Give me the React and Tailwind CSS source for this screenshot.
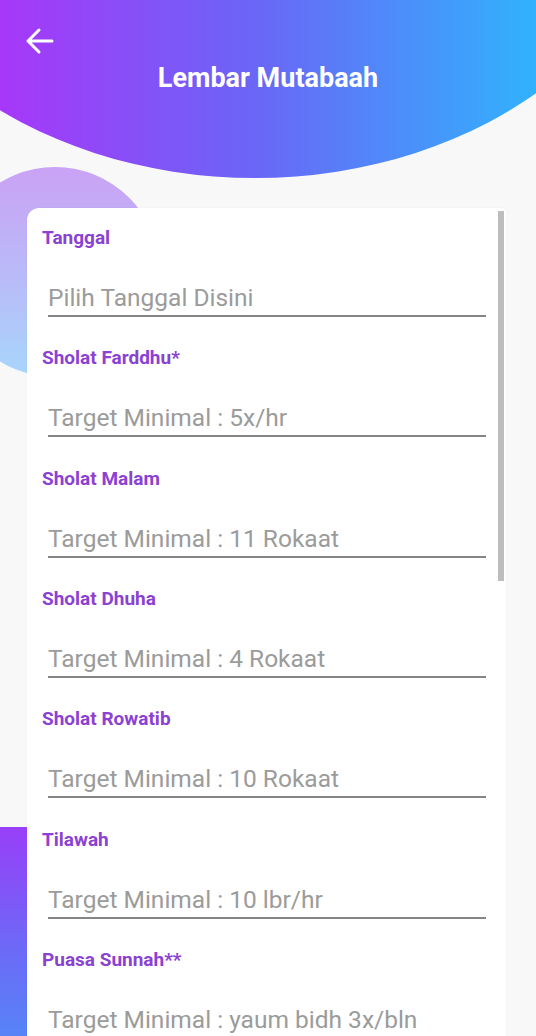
import React from "react";

const fields = [
  { label: "Tanggal", placeholder: "Pilih Tanggal Disini" },
  { label: "Sholat Farddhu*", placeholder: "Target Minimal : 5x/hr" },
  { label: "Sholat Malam", placeholder: "Target Minimal : 11 Rokaat" },
  { label: "Sholat Dhuha", placeholder: "Target Minimal : 4 Rokaat" },
  { label: "Sholat Rowatib", placeholder: "Target Minimal : 10 Rokaat" },
  { label: "Tilawah", placeholder: "Target Minimal : 10 lbr/hr" },
  { label: "Puasa Sunnah**", placeholder: "Target Minimal : yaum bidh 3x/bln" },
];

// satu baris isian: label ungu + input bergaris bawah
function Field({ label, placeholder }) {
  return (
    <div className="flex flex-col h-[120.33px]">
      <div className="pl-[15px] text-[19px] leading-[20px] font-bold text-[#8b41d3]">
        {label}
      </div>
      <div className="mt-[29px] ml-[21px] w-[438px] h-[40px] flex items-center border-b-[2px] border-[#858585]">
        <span className="pt-[4px] text-[24.5px] leading-[30px] font-normal text-[#9b9b9b] whitespace-nowrap">
          {placeholder}
        </span>
      </div>
    </div>
  );
}

export default function App() {
  return (
    <div
      className="relative w-[536px] h-[1036px] overflow-hidden bg-[#f8f8f8]"
      style={{ fontFamily: "Roboto, 'Noto Sans', sans-serif" }}
    >
      {/* latar dekoratif */}
      <div className="absolute left-[-165px] top-[-482px] w-[840px] h-[660px] rounded-[50%] bg-[linear-gradient(90deg,#c02cfc_0%,#a737f9_19.6%,#6a66f6_50%,#31b2fd_83.5%,#1ec8ff_100%)]" />
      <div className="absolute left-[-50px] top-[167px] w-[210px] h-[210px] rounded-full bg-[linear-gradient(180deg,#caa2f5_0%,#b8bcf8_55%,#a7d6fb_100%)]" />
      <div className="absolute left-[-20px] top-[827px] w-[60px] h-[260px] rounded-tr-[12px] bg-[linear-gradient(180deg,#983ff8_0%,#6a6cf7_50%,#4a92f6_100%)]" />

      {/* header */}
      <div className="relative flex flex-col h-[208px] pt-[26px]">
        <button className="ml-[24px] w-[32px] h-[30px] flex items-center justify-center">
          <svg width="30" height="30" viewBox="0 0 30 30" fill="none">
            <path
              d="M27 15H3M14 4L3 15l11 11"
              stroke="#ffffff"
              strokeWidth="3"
              strokeLinecap="round"
              strokeLinejoin="round"
            />
          </svg>
        </button>
        <h1 className="mt-[5px] text-center text-[27px] leading-[34px] font-bold text-white">
          Lembar Mutabaah
        </h1>
      </div>

      {/* kartu form */}
      <div className="relative ml-[27px] w-[479px] flex flex-col bg-white rounded-tl-[12px] rounded-tr-[4px] pt-[20px] shadow-[0_0_2px_rgba(0,0,0,0.06)]">
        <div className="absolute right-[2px] top-[3px] w-[6px] h-[370px] bg-[#bdbdbd]" />
        {fields.map((f) => (
          <Field key={f.label} label={f.label} placeholder={f.placeholder} />
        ))}
      </div>
    </div>
  );
}
